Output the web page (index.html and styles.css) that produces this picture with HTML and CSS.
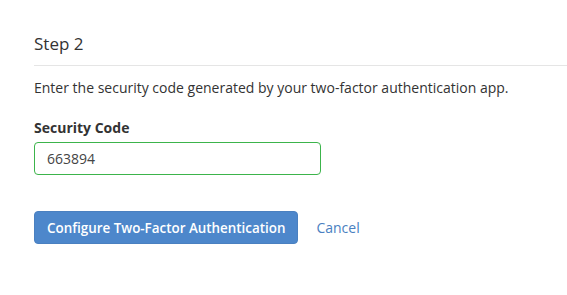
FILE: index.html
```html
<!DOCTYPE html>
<html lang="en">
<head>
    <meta charset="UTF-8">
    <title>Two-Factor Authentication</title>
    <link rel="stylesheet" href="styles.css">
</head>
<body>
    <div class="step">
        <h2 class="step-title">Step 2</h2>
        <p class="step-help">Enter the security code generated by your two-factor authentication app.</p>

        <form class="code-form">
            <label class="field-label" for="code">Security Code</label>
            <input class="code-input" id="code" type="text" value="663894">

            <div class="actions">
                <button type="submit" class="btn-primary">Configure Two-Factor Authentication</button>
                <a href="#" class="cancel-link">Cancel</a>
            </div>
        </form>
    </div>
</body>
</html>
```

FILE: styles.css
```css
* {
    margin: 0;
    padding: 0;
    box-sizing: border-box;
}

body {
    font-family: 'Open Sans', 'Noto Sans', sans-serif;
    font-size: 14px;
    line-height: 1.5;
    color: #333;
    background: #fff;
}

.step {
    padding: 32px 0 0 34px;
}

.step-title {
    font-size: 17px;
    font-weight: 400;
    line-height: 24px;
    padding-bottom: 9px;
    border-bottom: 1px solid #e5e5e5;
    margin-bottom: 12px;
}

.step-help {
    line-height: 20px;
    margin-bottom: 20px;
}

.code-form {
    display: flex;
    flex-direction: column;
    align-items: flex-start;
}

.field-label {
    font-weight: 700;
    line-height: 20px;
    margin-bottom: 4px;
}

.code-input {
    width: 287px;
    height: 33px;
    padding: 0 12px;
    font-family: inherit;
    font-size: 14px;
    color: #444;
    border: 1px solid #3cb44b;
    border-radius: 4px;
    outline: none;
}

.actions {
    display: flex;
    align-items: center;
    gap: 18px;
    margin-top: 36px;
}

.btn-primary {
    height: 33px;
    padding: 0 12px;
    font-family: inherit;
    font-size: 13.4px;
    font-weight: 600;
    color: #fff;
    background: #4d87cb;
    border: 1px solid #4a80c0;
    border-radius: 4px;
    cursor: pointer;
}

.cancel-link {
    color: #4a7fc1;
    text-decoration: none;
}
```
